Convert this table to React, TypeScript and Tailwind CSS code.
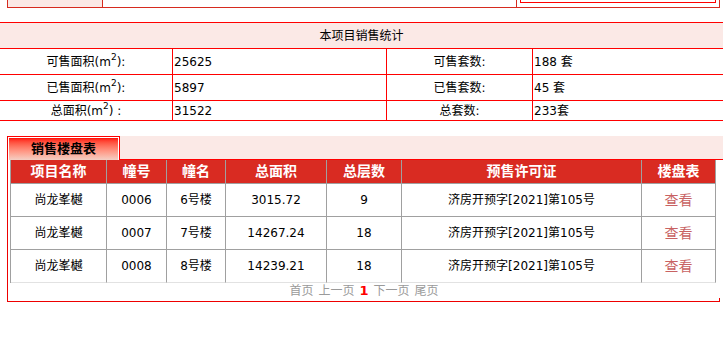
const FONT = { fontFamily: '"DejaVu Sans", "Noto Sans CJK SC", sans-serif' };

const statRows = [
  { left: '可售面积', unit: '):', leftVal: '25625', right: '可售套数:', rightVal: '188 套', h: 'h-[26px]' },
  { left: '已售面积', unit: '):', leftVal: '5897', right: '已售套数:', rightVal: '45 套', h: 'h-[26px]' },
  { left: '总面积', unit: ') :', leftVal: '31522', right: '总套数:', rightVal: '233套', h: 'h-[20px]' },
];

const headers = ['项目名称', '幢号', '幢名', '总面积', '总层数', '预售许可证', '楼盘表'];

const buildings = [
  ['尚龙峯樾', '0006', '6号楼', '3015.72', '9', '济房开预字[2021]第105号'],
  ['尚龙峯樾', '0007', '7号楼', '14267.24', '18', '济房开预字[2021]第105号'],
  ['尚龙峯樾', '0008', '8号楼', '14239.21', '18', '济房开预字[2021]第105号'],
];

const GRID = 'grid grid-cols-[96px_60px_59px_101px_75px_240px_74px]';

export default function App() {
  return (
    <div className="w-[723px] h-[344px] overflow-hidden bg-white text-black text-[12px]" style={FONT}>
      {/* tail of the table above */}
      <div className="ml-[7px] w-[713px] h-[8px] flex border-l border-r border-b border-[#d62b1f]">
        <div className="w-[95px] bg-[#fbe9e6] border-r border-[#d62b1f]" />
        <div className="w-[414px] border-r border-[#d62b1f]" />
        <div className="flex-1 px-[3px]">
          <div className="h-[3px] border-l border-r border-b border-[#ff0000]" />
        </div>
      </div>

      {/* 本项目销售统计 */}
      <div className="mt-[14px] w-[723px] border-t border-[#ff0000]">
        <div className="h-[26px] bg-[#fbe9e6] border-b border-[#ff0000] flex items-center justify-center">
          本项目销售统计
        </div>
        {statRows.map((r) => (
          <div key={r.left} className={`${r.h} flex border-b border-[#ff0000]`}>
            <div className="w-[173px] border-r border-[#ff0000] flex items-center justify-center">
              {r.left}(m<sup className="text-[9px] -top-[5px]">2</sup>{r.unit}
            </div>
            <div className="w-[214px] border-r border-[#ff0000] flex items-center pl-[1px]">{r.leftVal}</div>
            <div className="w-[146px] border-r border-[#ff0000] flex items-center justify-center">{r.right}</div>
            <div className="flex-1 flex items-center pl-[1px]">{r.rightVal}</div>
          </div>
        ))}
      </div>

      {/* 销售楼盘表 */}
      <div className="mt-[15px] ml-[7px] w-[713px] border-l border-[#ee0000] flex flex-col">
        <div className="flex h-[24px] -mr-[4px]">
          <div className="w-[112px] border-t border-r border-[#ff0000] pt-[1px] pl-[1px] pr-[1px] bg-white">
            <div className="h-full bg-gradient-to-b from-[#ff0000] to-[#f3cfc4] flex items-center justify-center text-[13px] font-bold">
              销售楼盘表
            </div>
          </div>
          <div className="flex-1 bg-[#fbe9e6] border-b border-[#ff0000]" />
        </div>

        <div className={`ml-[2px] w-[705px] border-l border-[#a0a0a0] ${GRID}`}>
          {headers.map((h) => (
            <div
              key={h}
              className="h-[24px] bg-[#d92b22] border-r border-b border-[#a0a0a0] text-white text-[14px] font-bold flex items-center justify-center"
            >
              {h}
            </div>
          ))}
          {buildings.map((row, i) => (
            <div key={row[1]} className="contents">
              {row.map((c, j) => (
                <div
                  key={j}
                  className={`h-[33px] border-r border-b ${i === 2 ? 'border-b-[#e2e2e2]' : ''} border-[#a0a0a0] flex items-center justify-center`}
                >
                  {c}
                </div>
              ))}
              <div
                className={`h-[33px] border-r border-b ${i === 2 ? 'border-b-[#e2e2e2]' : ''} border-[#a0a0a0] flex items-center justify-center text-[14px] text-[#c86262]`}
              >
                查看
              </div>
            </div>
          ))}
        </div>

        <div className="h-[15px] flex items-center justify-center gap-[5px] text-[#9a9a9a] leading-none">
          <span>首页</span>
          <span>上一页</span>
          <span className="text-[#ff0000] font-bold text-[13px]">1</span>
          <span>下一页</span>
          <span>尾页</span>
        </div>
        <div className="h-[4px] border-r border-b border-[#ee0000]" />
      </div>
    </div>
  );
}
